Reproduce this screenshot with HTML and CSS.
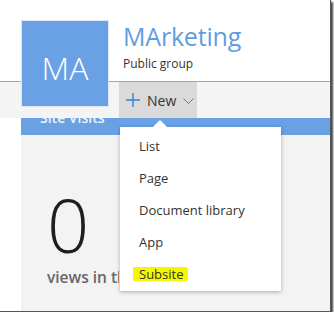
FILE: index.html
```html
<!DOCTYPE html>
<html lang="en">

<head>
  <meta charset="UTF-8">
  <meta name="viewport" content="width=device-width, initial-scale=1.0">
  <title>MArketing - Public group</title>
  <link rel="stylesheet" href="styles.css">
</head>

<body>
  <div class="frame">
    <header class="group-header">
      <div class="tile">MA</div>
      <div class="group-info">
        <h1 class="group-name">MArketing</h1>
        <p class="group-type">Public group</p>
      </div>
    </header>

    <div class="toolbar">
      <button class="new-btn">
        <svg class="plus" width="14" height="14" viewBox="0 0 14 14">
          <path d="M7 0 V14 M0 7 H14" stroke="#3b7fd6" stroke-width="1.4" fill="none" />
        </svg>
        <span>New</span>
        <svg class="chev" width="11" height="6" viewBox="0 0 11 6">
          <path d="M0.5 0.5 L5.5 5.5 L10.5 0.5" stroke="#777" stroke-width="1" fill="none" />
        </svg>
      </button>
    </div>

    <section class="visits">
      <div class="visits-title"><span>Site Visits</span></div>
      <div class="visits-body">
        <div class="count">0</div>
        <div class="count-label">views in the last 7 days</div>
      </div>
    </section>

    <!-- New menu, open -->
    <ul class="new-menu">
      <li>List</li>
      <li>Page</li>
      <li>Document library</li>
      <li>App</li>
      <li><span class="marker">Subsite</span></li>
    </ul>
  </div>
</body>

</html>
```

FILE: styles.css
```css
* {
  margin: 0;
  padding: 0;
  box-sizing: border-box;
  font-family: 'Open Sans', 'Noto Sans', sans-serif;
}

body {
  background: white;
  color: #333;
}

.frame {
  position: relative;
  width: 331px;
  height: 312px;
  background: white;
  border-right: 1px solid #555;
  border-bottom: 1px solid #555;
  box-shadow: 2px 2px 2px rgba(0, 0, 0, 0.75);
  overflow: hidden;
}

.group-header {
  display: flex;
  align-items: flex-start;
  height: 82px;
  border-bottom: 1px solid #7eaee8;
}

.tile {
  position: relative;
  z-index: 2;
  width: 88px;
  height: 87px;
  margin: 20px 0 0 21px;
  background: #69a1e4;
  border: 1px solid #dfe9f6;
  color: white;
  font-size: 32px;
  font-weight: 300;
  display: flex;
  align-items: center;
  justify-content: center;
  padding-top: 8px;
}

.group-info {
  margin: 19px 0 0 14px;
}

.group-name {
  font-size: 25px;
  font-weight: 400;
  color: #5f9de3;
  line-height: 34px;
  letter-spacing: -0.2px;
}

.group-type {
  font-size: 12px;
  line-height: 16px;
  margin-top: 3px;
  color: #333;
}

.toolbar {
  position: relative;
  z-index: 1;
  height: 36px;
  background: rgba(243, 243, 243, 0.9);
  padding-left: 119px;
}

.new-btn {
  height: 36px;
  width: 78px;
  border: none;
  background: #dadada;
  display: flex;
  align-items: center;
  padding-left: 7px;
  font-size: 14px;
  color: #333;
}

.new-btn span {
  margin: 0 7px 0 7px;
  font-family: 'Open Sans', sans-serif;
}

.chev {
  margin-top: 1px;
}

.visits {
  margin-left: 21px;
}

.visits-title {
  height: 17px;
  background: #6aa1e3;
  padding-left: 19px;
}

.visits-title span {
  display: block;
  transform: translateY(-9px);
  color: rgba(255, 255, 255, 0.9);
  font-size: 14px;
  font-weight: 600;
  line-height: 18px;
}

.visits-body {
  height: 180px;
  background: #f3f3f3;
  padding: 50px 0 0 26px;
}

.count {
  font-size: 74px;
  font-weight: 300;
  line-height: 80px;
  color: #1e1e1e;
}

.count-label {
  width: 72px;
  overflow: hidden;
  font-size: 15.5px;
  font-weight: 600;
  color: #666;
  white-space: nowrap;
  margin-top: 1px;
}

.new-menu {
  position: absolute;
  top: 127px;
  left: 120px;
  width: 161px;
  height: 164px;
  background: white;
  list-style: none;
  padding: 3px 0 1px;
  box-shadow: 0 1px 4px rgba(0, 0, 0, 0.3);
  z-index: 3;
}

.new-menu::before {
  content: '';
  position: absolute;
  top: -5px;
  left: 35px;
  width: 10px;
  height: 10px;
  background: white;
  transform: rotate(45deg);
}

.new-menu li {
  height: 32px;
  line-height: 32px;
  padding-left: 19px;
  font-size: 13px;
  color: #333;
}

.marker {
  display: inline-block;
  line-height: 14px;
  padding: 0 5px 0 6px;
  margin-left: -6px;
  background: #f6f600;
  border-radius: 1px 3px 2px 1px;
}
```
